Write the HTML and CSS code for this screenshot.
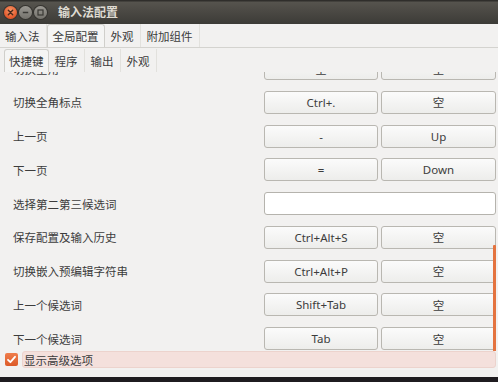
FILE: index.html
```html
<!DOCTYPE html>
<html lang="zh-CN">
<head>
  <meta charset="UTF-8">
  <title>输入法配置</title>
  <link rel="stylesheet" href="styles.css">
</head>
<body>

<div class="window">
  <div class="titlebar">
    <span class="wbtn close">
      <svg width="13" height="13" viewBox="0 0 13 13"><path d="M4.3 4.3 L8.7 8.7 M8.7 4.3 L4.3 8.7" stroke="#4a2a1c" stroke-width="1.4" stroke-linecap="round"/></svg>
    </span>
    <span class="wbtn">
      <svg width="13" height="13" viewBox="0 0 13 13"><path d="M3.8 6.5 H9.2" stroke="#3a3935" stroke-width="1.5"/></svg>
    </span>
    <span class="wbtn">
      <svg width="13" height="13" viewBox="0 0 13 13"><rect x="4" y="4" width="5" height="5" fill="none" stroke="#3a3935" stroke-width="1.2"/></svg>
    </span>
    <span class="title">输入法配置</span>
  </div>

  <div class="tabs top-tabs">
    <span class="tab">输入法</span>
    <span class="tab active">全局配置</span>
    <span class="tab">外观</span>
    <span class="tab">附加组件</span>
  </div>

  <div class="tabs sub-tabs">
    <span class="tab active">快捷键</span>
    <span class="tab">程序</span>
    <span class="tab">输出</span>
    <span class="tab">外观</span>
  </div>

  <div class="viewport">
    <div class="list">
      <span class="label">切换全角</span>
      <span class="key">空</span>
      <span class="key">空</span>

      <span class="label">切换全角标点</span>
      <span class="key">Ctrl+.</span>
      <span class="key">空</span>

      <span class="label">上一页</span>
      <span class="key">-</span>
      <span class="key">Up</span>

      <span class="label">下一页</span>
      <span class="key">=</span>
      <span class="key">Down</span>

      <span class="label">选择第二第三候选词</span>
      <span class="entry"></span>

      <span class="label">保存配置及输入历史</span>
      <span class="key">Ctrl+Alt+S</span>
      <span class="key">空</span>

      <span class="label">切换嵌入预编辑字符串</span>
      <span class="key">Ctrl+Alt+P</span>
      <span class="key">空</span>

      <span class="label">上一个候选词</span>
      <span class="key">Shift+Tab</span>
      <span class="key">空</span>

      <span class="label">下一个候选词</span>
      <span class="key">Tab</span>
      <span class="key">空</span>
    </div>
    <div class="slider"></div>
  </div>

  <div class="advanced">
    <span class="checkbox">
      <svg width="13" height="13" viewBox="0 0 13 13"><path d="M3 6.8 L5.4 9.2 L10 3.8" fill="none" stroke="#fff" stroke-width="1.8" stroke-linecap="round" stroke-linejoin="round"/></svg>
    </span>
    <span class="adv-label">显示高级选项</span>
  </div>
</div>
<div class="desktop"></div>

</body>
</html>
```

FILE: styles.css
```css
body {
  margin: 0;
  background: #f2f1f0;
  font-family: "Noto Sans", "Noto Sans CJK SC", sans-serif;
  font-size: 11.5px;
  color: #3c3c3c;
  width: 498px;
  height: 382px;
  overflow: hidden;
}
.window {
  height: 377px;
  display: flex;
  flex-direction: column;
  background: #f2f1f0;
}
.titlebar {
  height: 24px;
  flex: none;
  display: flex;
  align-items: center;
  padding-left: 4px;
  background: linear-gradient(to bottom, #2f2e2b 0, #2f2e2b 1px, #56544e 2px, #4a4843 12px, #3c3b37 100%);
}
.wbtn {
  width: 13px;
  height: 13px;
  border-radius: 50%;
  margin-right: 2px;
  background: linear-gradient(to bottom, #9a9892, #74726c);
  box-shadow: 0 0 0 1px #34332f;
  display: flex;
}
.wbtn.close {
  background: radial-gradient(circle at 50% 35%, #f79768, #e2572a 70%);
}
.title {
  margin-left: 9px;
  color: #dfdbd2;
  font-weight: bold;
  font-size: 12px;
}
.tabs {
  flex: none;
  height: 24px;
  display: flex;
  align-items: stretch;
}
.top-tabs {
  border-bottom: 1px solid #d4d3cf;
  height: 23px;
}
.tab {
  display: flex;
  align-items: center;
  padding: 0 6px;
  border-right: 1px solid #e2e1dd;
}
.top-tabs .tab:first-child {
  padding-left: 5px;
}
.tab.active {
  background: #f5f5f4;
  border: 1px solid #d0cfcb;
  border-bottom: none;
  border-radius: 3px 3px 0 0;
  padding: 0 5px;
}
.sub-tabs {
  padding-left: 4px;
  padding-top: 1px;
  height: 23px;
}
.sub-tabs .tab {
  padding: 0 6px;
}
.sub-tabs .tab.active {
  padding: 0 4px;
}
.viewport {
  position: relative;
  height: 279px;
  flex: none;
  overflow: hidden;
}
.list {
  margin-top: -15px;
  padding: 0 2px 0 13px;
  display: grid;
  grid-template-columns: 1fr 114px 115px;
  grid-auto-rows: 23px;
  column-gap: 3px;
  row-gap: 10.75px;
  align-items: center;
}
.key {
  height: 23px;
  box-sizing: border-box;
  border: 1px solid #b9b7b1;
  border-radius: 3px;
  background: linear-gradient(to bottom, #fbfbfb, #ededeb);
  display: flex;
  align-items: center;
  justify-content: center;
}
.entry {
  grid-column: 2 / 4;
  height: 23px;
  box-sizing: border-box;
  border: 1px solid #b5b3ad;
  border-radius: 3px;
  background: #ffffff;
}
.slider {
  position: absolute;
  right: 2px;
  top: 173px;
  width: 3px;
  height: 107px;
  border-radius: 1px;
  background: #e4733f;
}
.advanced {
  height: 17px;
  flex: none;
  display: flex;
  align-items: center;
  padding-left: 5px;
}
.checkbox {
  width: 13px;
  height: 13px;
  border-radius: 2px;
  background: linear-gradient(to bottom, #ef7d4c, #dc5a28);
  display: flex;
  margin-right: 4px;
}
.adv-label {
  flex: 1;
  height: 17px;
  margin-right: 2px;
  box-sizing: border-box;
  padding-left: 1px;
  display: flex;
  align-items: center;
  background: #f4e0dc;
  border: 1px solid #ecd3cd;
  border-radius: 3px;
}
.desktop {
  height: 5px;
  background: #1f1c20;
}
```
